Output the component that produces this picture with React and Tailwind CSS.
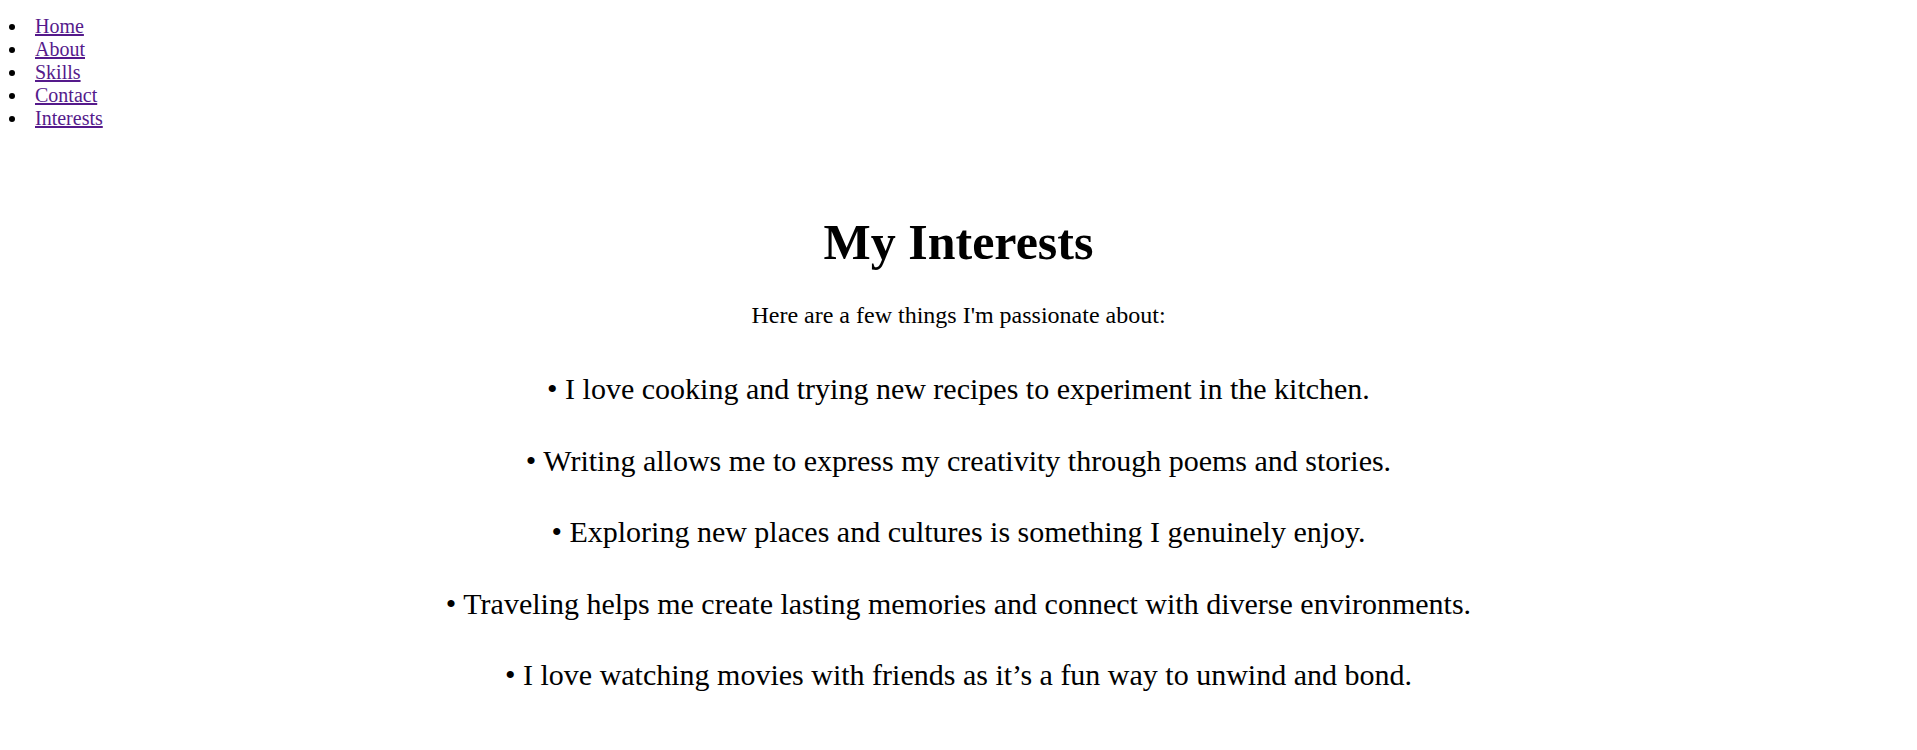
const links = ["Home", "About", "Skills", "Contact", "Interests"];

const interests = [
  "I love cooking and trying new recipes to experiment in the kitchen.",
  "Writing allows me to express my creativity through poems and stories.",
  "Exploring new places and cultures is something I genuinely enjoy.",
  "Traveling helps me create lasting memories and connect with diverse environments.",
  "I love watching movies with friends as it\u2019s a fun way to unwind and bond.",
];

const App = () => {
  return (
    <div className="min-h-[750px] bg-white text-black font-['Liberation_Serif','Times_New_Roman',serif]">
      <nav>
        <ul className="mt-[15px] text-[20px] leading-[23px]">
          {links.map((link) => (
            <li key={link} className="flex">
              <span className="w-[35px] flex items-center pl-[9px]">
                <span className="w-[6px] h-[6px] rounded-full bg-black" />
              </span>
              <a href="#" className="text-[#551a8b] underline">{link}</a>
            </li>
          ))}
        </ul>
      </nav>
      <section className="flex flex-col items-center text-center">
        <h1 className="mt-[85px] text-[50px] leading-[55px] font-bold">My Interests</h1>
        <p className="mt-[31px] text-[24px] leading-[28px]">Here are a few things I'm passionate about:</p>
        <div className="mt-[42px] flex flex-col gap-[36.5px] text-[30px] leading-[35px]">
          {interests.map((item) => (
            <p key={item}>&bull; {item}</p>
          ))}
        </div>
      </section>
    </div>
  );
};

export default App;
